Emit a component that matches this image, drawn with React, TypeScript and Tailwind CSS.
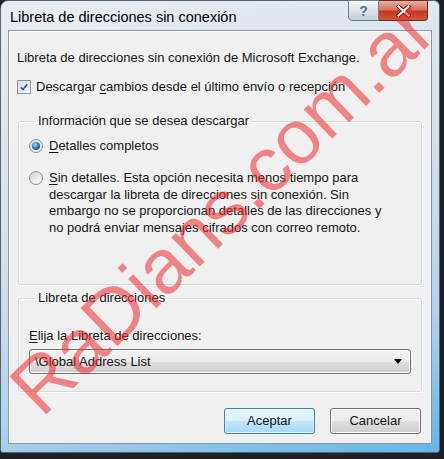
import React from 'react';

function Checkbox() {
  return (
    <div className="w-[14px] h-[14px] border border-[#8e8f9c] bg-gradient-to-br from-[#dcdde6] to-[#fbfbfd] p-[1px] shrink-0">
      <svg viewBox="0 0 12 12" className="w-full h-full">
        <path d="M2.2 6.2 L4.8 9 L9.8 2.6" fill="none" stroke="#2e4a8f" strokeWidth="1.8" />
      </svg>
    </div>
  );
}

function Radio({ checked }: { checked?: boolean }) {
  return (
    <div className="w-[14px] h-[14px] rounded-full border border-[#8e8f8f] bg-gradient-to-br from-[#d8d8d8] to-[#fafafa] flex items-center justify-center shrink-0">
      {checked && (
        <div className="w-[8px] h-[8px] rounded-full bg-[radial-gradient(circle_at_40%_35%,#a8dcf8_0%,#2f7cc0_45%,#0d3d73_100%)]" />
      )}
    </div>
  );
}

export default function App() {
  return (
    <div className="relative w-[444px] h-[459px] overflow-hidden bg-[#1e2226] font-['Liberation_Sans',Arial,sans-serif] text-[13px] leading-[16px] text-[#151515]">
      {/* Window frame */}
      <div className="flex flex-col w-[440px] h-[453px] rounded-tl-[8px] rounded-tr-[6px] rounded-b-[3px] border border-[#56646f] bg-[linear-gradient(165deg,#e6edf3_0%,#d6e0e9_45%,#b2d3ea_75%,#63b6e8_100%)]">
        {/* Title bar */}
        <div className="flex justify-between h-[29px]">
          <div className="pl-[9px] pt-[8px] text-[14.5px] leading-[16px] text-black">
            Libreta de direcciones sin conexión
          </div>
          <div className="flex mr-[11px] -mt-[1px] h-[21px]">
            <div className="w-[31px] h-full rounded-bl-[4px] border border-[#6f7e8d] bg-gradient-to-b from-[#f4f7fa] via-[#dbe3ea] to-[#c3cfda] flex items-center justify-center text-[14px] font-bold text-[#62728a] shadow-[inset_0_1px_0_#fff]">
              ?
            </div>
            <div className="w-[49px] h-full rounded-br-[4px] border border-l-0 border-[#6b2b22] bg-[linear-gradient(180deg,#eab0a4_0%,#d9735f_45%,#c2391f_55%,#d0573c_100%)] flex items-center justify-center">
              <svg viewBox="0 0 16 12" className="w-[17px] h-[12px]">
                <path d="M3 1.5 L13 10.5 M13 1.5 L3 10.5" stroke="#5a1a12" strokeWidth="4" strokeLinecap="square" />
                <path d="M3 1.5 L13 10.5 M13 1.5 L3 10.5" stroke="#ffffff" strokeWidth="2.2" strokeLinecap="square" />
              </svg>
            </div>
          </div>
        </div>

        {/* Client area */}
        <div className="flex-1 flex flex-col mx-[7px] mb-[8px] border border-[#8798a8] bg-[#f0f0f0] shadow-[inset_1px_1px_0_#ffffff] pt-[19px] px-[8px]">
          <div>Libreta de direcciones sin conexión de Microsoft Exchange.</div>

          <div className="flex items-center gap-[5px] mt-[13px] h-[16px]">
            <Checkbox />
            <span>
              Descargar <span className="underline underline-offset-2">c</span>ambios desde el último envío o recepción
            </span>
          </div>

          {/* Group: información */}
          <fieldset className="mt-[18px] ml-[1px] mr-[1px] border border-[#d3d9de] rounded-[3px] shadow-[inset_1px_1px_0_#fff,1px_1px_0_#fff] pl-[10px] pr-[6px] pb-[48px]">
            <legend className="ml-[7px] px-[2px]">Información que se desea descargar</legend>
            <div className="flex items-center gap-[6px] mt-[9px] h-[16px]">
              <Radio checked />
              <span>
                <span className="underline underline-offset-2">D</span>etalles completos
              </span>
            </div>
            <div className="flex items-start gap-[6px] mt-[16px]">
              <div className="pt-[1px]">
                <Radio />
              </div>
              <div className="leading-[16.5px]">
                <div>
                  <span className="underline underline-offset-2">S</span>in detalles. Esta opción necesita menos tiempo para
                </div>
                <div>descargar la libreta de direcciones sin conexión. Sin</div>
                <div>embargo no se proporcionan detalles de las direcciones y</div>
                <div>no podrá enviar mensajes cifrados con correo remoto.</div>
              </div>
            </div>
          </fieldset>

          {/* Group: libreta */}
          <fieldset className="mt-[5px] ml-[1px] mr-[1px] border border-[#d3d9de] rounded-[3px] shadow-[inset_1px_1px_0_#fff,1px_1px_0_#fff] pl-[10px] pr-[10px] pb-[17px]">
            <legend className="ml-[7px] px-[2px]">Libreta de direcciones</legend>
            <div className="mt-[22px]">
              <span className="underline underline-offset-2">E</span>lija la Libreta de direcciones:
            </div>
            <div className="mt-[5px] h-[25px] flex items-center justify-between rounded-[3px] border border-[#707070] bg-[linear-gradient(180deg,#f4f4f4_0%,#ebebeb_50%,#dddddd_51%,#cfcfcf_100%)] shadow-[inset_0_0_0_1px_#fbfbfb] pl-[5px] pr-[8px]">
              <span>\Global Address List</span>
              <svg viewBox="0 0 8 5" className="w-[8px] h-[5px]">
                <path d="M0 0 H8 L4 5 Z" fill="#000" />
              </svg>
            </div>
          </fieldset>

          {/* Buttons */}
          <div className="flex justify-end gap-[15px] mt-[16px] pr-[2px]">
            <button className="w-[91px] h-[26px] rounded-[3px] border border-[#3c7fb1] bg-[linear-gradient(180deg,#eaf6fd_0%,#d9f0fc_50%,#bee6fd_51%,#a7d9f5_100%)] shadow-[inset_0_0_0_1px_#e6f5fd]">
              Aceptar
            </button>
            <button className="w-[91px] h-[26px] rounded-[3px] border border-[#707070] bg-[linear-gradient(180deg,#f2f2f2_0%,#ebebeb_50%,#dddddd_51%,#cfcfcf_100%)] shadow-[inset_0_0_0_1px_#fbfbfb]">
              Cancelar
            </button>
          </div>
        </div>
      </div>

      {/* Watermark */}
      <div className="pointer-events-none absolute left-[222px] top-[208px] -translate-x-1/2 -translate-y-1/2 -rotate-[44deg] whitespace-nowrap text-[77px] leading-none text-[#ee2a2a]/55 font-['Liberation_Sans',Arial,sans-serif]">
        RaDians.com.ar
      </div>
    </div>
  );
}
